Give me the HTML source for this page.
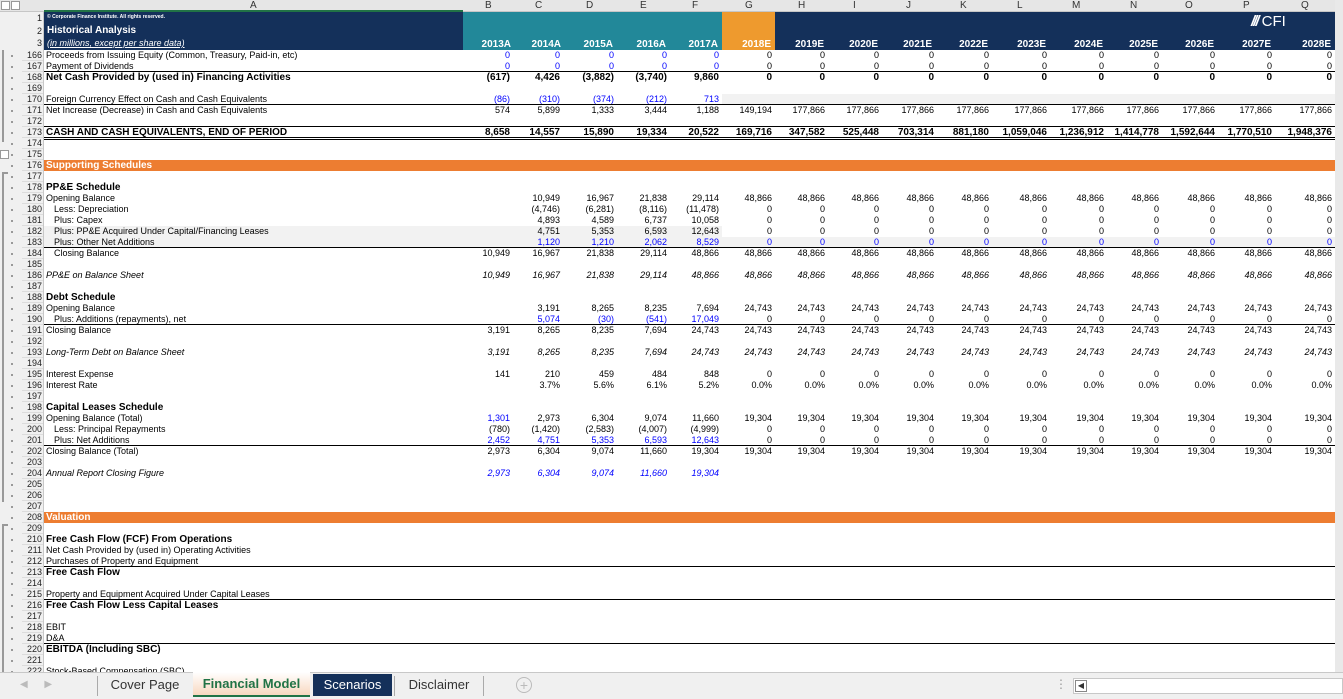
<!DOCTYPE html>
<html><head><meta charset="utf-8"><style>
*{margin:0;padding:0;box-sizing:border-box}
body{width:1343px;height:699px;overflow:hidden;background:#fff;font-family:"Liberation Sans",Arial,sans-serif;font-size:9px;color:#000;position:relative}
.abs{position:absolute}
table{border-collapse:separate;border-spacing:0;table-layout:fixed;position:absolute;left:22px}
td{height:11px;line-height:11px;white-space:nowrap;overflow:visible;text-align:right;padding-right:3px;vertical-align:middle}
td.rn{background:#f0f0f0;text-align:right;padding-right:2px;box-shadow:inset -1px 0 #c8c8c8,inset 0 -1px #dcdcdc;color:#222;font-size:9px}
td.a{text-align:left;padding-left:2px;overflow:hidden}
.in{padding-left:10px!important}
.b td{font-weight:bold;font-size:10px}
.b td.rn{font-weight:normal;font-size:9px}
.u td:not(.rn){box-shadow:inset 0 -1px #000}
.tl td:not(.rn){box-shadow:inset 0 1px #fff,inset 0 2px #000}
.bl{color:#0000ff}
.it td:not(.rn){font-style:italic}
.g{background:#f2f2f2}
.or td:not(.rn){background:#ed7d31;color:#fff;font-weight:bold;font-size:10px}
</style></head><body>
<div class="abs" style="left:0;top:0;width:1343px;height:12px;background:#e6e6e6;border-bottom:1px solid #c6c6c6"></div>
<div class="abs" style="left:1px;top:1px;width:9px;height:9px;border:1px solid #999;background:#fff"></div>
<div class="abs" style="left:11px;top:1px;width:9px;height:9px;border:1px solid #999;background:#fff"></div>
<div class="abs" style="left:44px;top:10px;width:419px;height:2px;background:#217346"></div>
<div class="abs" style="left:0;top:0;font-size:10px;line-height:12px;color:#333">
<span class="abs" style="left:250px">A</span>
<span class="abs" style="left:485px">B</span><span class="abs" style="left:535px">C</span><span class="abs" style="left:586px">D</span><span class="abs" style="left:640px">E</span><span class="abs" style="left:692px">F</span><span class="abs" style="left:745px">G</span><span class="abs" style="left:798px">H</span><span class="abs" style="left:853px">I</span><span class="abs" style="left:906px">J</span><span class="abs" style="left:960px">K</span><span class="abs" style="left:1017px">L</span><span class="abs" style="left:1072px">M</span><span class="abs" style="left:1130px">N</span><span class="abs" style="left:1185px">O</span><span class="abs" style="left:1243px">P</span><span class="abs" style="left:1301px">Q</span>
</div>
<div class="abs" style="left:44px;top:12px;width:1291px;height:38px;background:#14305a"></div>
<div class="abs" style="left:463px;top:12px;width:259px;height:38px;background:#228899"></div>
<div class="abs" style="left:722px;top:12px;width:53px;height:38px;background:#ee9a2e"></div>
<div class="abs" style="left:1335px;top:0;width:8px;height:672px;background:#e9e9e9"></div>
<div class="abs" style="left:22px;top:12px;width:22px;height:38px;background:#f0f0f0;box-shadow:inset -1px 0 #c8c8c8"></div>
<div class="abs" style="left:0;top:12px;width:22px;height:38px;background:#f0f0f0"></div>
<div class="abs" style="left:24px;top:12px;width:18px;font-size:9px;line-height:12.5px;text-align:right;color:#222">1<br>2<br>3</div>
<div class="abs" style="left:47px;top:14px;color:#fff;font-size:5px;font-weight:bold">© Corporate Finance Institute. All rights reserved.</div>
<div class="abs" style="left:47px;top:25px;color:#fff;font-size:10px;font-weight:bold">Historical Analysis</div>
<div class="abs" style="left:47px;top:38px;color:#fff;font-size:9px;font-style:italic;text-decoration:underline">(in millions, except per share data)</div>
<div class="abs" style="left:1251px;top:13px;color:#fff;font-size:15px"><span style="font-weight:bold;font-style:italic;letter-spacing:-2px">///</span> CFI</div>
<div class="abs" style="top:39px;left:0;color:#fff;font-weight:bold;font-size:10px;line-height:11px">
<span class="abs" style="right:-511px">2013A</span><span class="abs" style="right:-561px">2014A</span><span class="abs" style="right:-613px">2015A</span><span class="abs" style="right:-666px">2016A</span><span class="abs" style="right:-718px">2017A</span><span class="abs" style="right:-771px">2018E</span><span class="abs" style="right:-824px">2019E</span><span class="abs" style="right:-878px">2020E</span><span class="abs" style="right:-932px">2021E</span><span class="abs" style="right:-988px">2022E</span><span class="abs" style="right:-1046px">2023E</span><span class="abs" style="right:-1103px">2024E</span><span class="abs" style="right:-1158px">2025E</span><span class="abs" style="right:-1214px">2026E</span><span class="abs" style="right:-1271px">2027E</span><span class="abs" style="right:-1331px">2028E</span>
</div>
<div class="abs" style="left:0;top:50px;width:22px;height:622px;background:#f0f0f0"></div>
<div class="abs" style="left:2px;top:50px;width:2px;height:92px;background:#999"></div>
<div class="abs" style="left:0;top:150px;width:9px;height:9px;border:1px solid #999;background:#fff"></div>
<div class="abs" style="left:2px;top:172px;width:2px;height:330px;background:#999"></div>
<div class="abs" style="left:2px;top:172px;width:6px;height:2px;background:#999"></div>
<div class="abs" style="left:2px;top:524px;width:2px;height:148px;background:#999"></div>
<div class="abs" style="left:2px;top:524px;width:6px;height:2px;background:#999"></div>

<table style="top:50px;width:1313px">
<colgroup><col style="width:22px"><col style="width:419px"><col style="width:50px"><col style="width:50px"><col style="width:54px"><col style="width:53px"><col style="width:52px"><col style="width:53px"><col style="width:53px"><col style="width:54px"><col style="width:55px"><col style="width:55px"><col style="width:58px"><col style="width:57px"><col style="width:55px"><col style="width:56px"><col style="width:57px"><col style="width:60px"></colgroup>
<tr><td class="rn">166</td><td class="a">Proceeds from Issuing Equity (Common, Treasury, Paid-in, etc)</td><td class="bl">0</td><td class="bl">0</td><td class="bl">0</td><td class="bl">0</td><td class="bl">0</td><td>0</td><td>0</td><td>0</td><td>0</td><td>0</td><td>0</td><td>0</td><td>0</td><td>0</td><td>0</td><td>0</td></tr>
<tr class="u"><td class="rn">167</td><td class="a">Payment of Dividends</td><td class="bl">0</td><td class="bl">0</td><td class="bl">0</td><td class="bl">0</td><td class="bl">0</td><td>0</td><td>0</td><td>0</td><td>0</td><td>0</td><td>0</td><td>0</td><td>0</td><td>0</td><td>0</td><td>0</td></tr>
<tr class="b"><td class="rn">168</td><td class="a">Net Cash Provided by (used in) Financing Activities</td><td>(617)</td><td>4,426</td><td>(3,882)</td><td>(3,740)</td><td>9,860</td><td>0</td><td>0</td><td>0</td><td>0</td><td>0</td><td>0</td><td>0</td><td>0</td><td>0</td><td>0</td><td>0</td></tr>
<tr><td class="rn">169</td><td colspan="17"></td></tr>
<tr class="u"><td class="rn">170</td><td class="a">Foreign Currency Effect on Cash and Cash Equivalents</td><td class="bl">(86)</td><td class="bl">(310)</td><td class="bl">(374)</td><td class="bl">(212)</td><td class="bl">713</td><td class="g"></td><td class="g"></td><td class="g"></td><td class="g"></td><td class="g"></td><td class="g"></td><td class="g"></td><td class="g"></td><td class="g"></td><td class="g"></td><td class="g"></td></tr>
<tr><td class="rn">171</td><td class="a">Net Increase (Decrease) in Cash and Cash Equivalents</td><td>574</td><td>5,899</td><td>1,333</td><td>3,444</td><td>1,188</td><td>149,194</td><td>177,866</td><td>177,866</td><td>177,866</td><td>177,866</td><td>177,866</td><td>177,866</td><td>177,866</td><td>177,866</td><td>177,866</td><td>177,866</td></tr>
<tr class="u"><td class="rn">172</td><td colspan="17"></td></tr>
<tr class="b u"><td class="rn">173</td><td class="a">CASH AND CASH EQUIVALENTS, END OF PERIOD</td><td>8,658</td><td>14,557</td><td>15,890</td><td>19,334</td><td>20,522</td><td>169,716</td><td>347,582</td><td>525,448</td><td>703,314</td><td>881,180</td><td>1,059,046</td><td>1,236,912</td><td>1,414,778</td><td>1,592,644</td><td>1,770,510</td><td>1,948,376</td></tr>
<tr class="tl"><td class="rn">174</td><td colspan="17"></td></tr>
<tr><td class="rn">175</td><td colspan="17"></td></tr>
<tr class="or"><td class="rn">176</td><td class="a" colspan="17">Supporting Schedules</td></tr>
<tr><td class="rn">177</td><td colspan="17"></td></tr>
<tr class="b"><td class="rn">178</td><td class="a" colspan="17">PP&amp;E Schedule</td></tr>
<tr><td class="rn">179</td><td class="a">Opening Balance</td><td></td><td>10,949</td><td>16,967</td><td>21,838</td><td>29,114</td><td>48,866</td><td>48,866</td><td>48,866</td><td>48,866</td><td>48,866</td><td>48,866</td><td>48,866</td><td>48,866</td><td>48,866</td><td>48,866</td><td>48,866</td></tr>
<tr><td class="rn">180</td><td class="a in">Less: Depreciation</td><td></td><td>(4,746)</td><td>(6,281)</td><td>(8,116)</td><td>(11,478)</td><td>0</td><td>0</td><td>0</td><td>0</td><td>0</td><td>0</td><td>0</td><td>0</td><td>0</td><td>0</td><td>0</td></tr>
<tr><td class="rn">181</td><td class="a in">Plus: Capex</td><td></td><td>4,893</td><td>4,589</td><td>6,737</td><td>10,058</td><td>0</td><td>0</td><td>0</td><td>0</td><td>0</td><td>0</td><td>0</td><td>0</td><td>0</td><td>0</td><td>0</td></tr>
<tr><td class="rn">182</td><td class="a in g">Plus: PP&amp;E Acquired Under Capital/Financing Leases</td><td class="g"></td><td class="g">4,751</td><td class="g">5,353</td><td class="g">6,593</td><td class="g">12,643</td><td>0</td><td>0</td><td>0</td><td>0</td><td>0</td><td>0</td><td>0</td><td>0</td><td>0</td><td>0</td><td>0</td></tr>
<tr class="u"><td class="rn">183</td><td class="a in g">Plus: Other Net Additions</td><td class="g"></td><td class="g bl">1,120</td><td class="g bl">1,210</td><td class="g bl">2,062</td><td class="g bl">8,529</td><td class="g bl">0</td><td class="g bl">0</td><td class="g bl">0</td><td class="g bl">0</td><td class="g bl">0</td><td class="g bl">0</td><td class="g bl">0</td><td class="g bl">0</td><td class="g bl">0</td><td class="g bl">0</td><td class="g bl">0</td></tr>
<tr><td class="rn">184</td><td class="a in">Closing Balance</td><td>10,949</td><td>16,967</td><td>21,838</td><td>29,114</td><td>48,866</td><td>48,866</td><td>48,866</td><td>48,866</td><td>48,866</td><td>48,866</td><td>48,866</td><td>48,866</td><td>48,866</td><td>48,866</td><td>48,866</td><td>48,866</td></tr>
<tr><td class="rn">185</td><td colspan="17"></td></tr>
<tr class="it"><td class="rn">186</td><td class="a">PP&amp;E on Balance Sheet</td><td>10,949</td><td>16,967</td><td>21,838</td><td>29,114</td><td>48,866</td><td>48,866</td><td>48,866</td><td>48,866</td><td>48,866</td><td>48,866</td><td>48,866</td><td>48,866</td><td>48,866</td><td>48,866</td><td>48,866</td><td>48,866</td></tr>
<tr><td class="rn">187</td><td colspan="17"></td></tr>
<tr class="b"><td class="rn">188</td><td class="a" colspan="17">Debt Schedule</td></tr>
<tr><td class="rn">189</td><td class="a">Opening Balance</td><td></td><td>3,191</td><td>8,265</td><td>8,235</td><td>7,694</td><td>24,743</td><td>24,743</td><td>24,743</td><td>24,743</td><td>24,743</td><td>24,743</td><td>24,743</td><td>24,743</td><td>24,743</td><td>24,743</td><td>24,743</td></tr>
<tr class="u"><td class="rn">190</td><td class="a in">Plus: Additions (repayments), net</td><td></td><td class="bl">5,074</td><td class="bl">(30)</td><td class="bl">(541)</td><td class="bl">17,049</td><td>0</td><td>0</td><td>0</td><td>0</td><td>0</td><td>0</td><td>0</td><td>0</td><td>0</td><td>0</td><td>0</td></tr>
<tr><td class="rn">191</td><td class="a">Closing Balance</td><td>3,191</td><td>8,265</td><td>8,235</td><td>7,694</td><td>24,743</td><td>24,743</td><td>24,743</td><td>24,743</td><td>24,743</td><td>24,743</td><td>24,743</td><td>24,743</td><td>24,743</td><td>24,743</td><td>24,743</td><td>24,743</td></tr>
<tr><td class="rn">192</td><td colspan="17"></td></tr>
<tr class="it"><td class="rn">193</td><td class="a">Long-Term Debt on Balance Sheet</td><td>3,191</td><td>8,265</td><td>8,235</td><td>7,694</td><td>24,743</td><td>24,743</td><td>24,743</td><td>24,743</td><td>24,743</td><td>24,743</td><td>24,743</td><td>24,743</td><td>24,743</td><td>24,743</td><td>24,743</td><td>24,743</td></tr>
<tr><td class="rn">194</td><td colspan="17"></td></tr>
<tr><td class="rn">195</td><td class="a">Interest Expense</td><td>141</td><td>210</td><td>459</td><td>484</td><td>848</td><td>0</td><td>0</td><td>0</td><td>0</td><td>0</td><td>0</td><td>0</td><td>0</td><td>0</td><td>0</td><td>0</td></tr>
<tr><td class="rn">196</td><td class="a">Interest Rate</td><td></td><td>3.7%</td><td>5.6%</td><td>6.1%</td><td>5.2%</td><td>0.0%</td><td>0.0%</td><td>0.0%</td><td>0.0%</td><td>0.0%</td><td>0.0%</td><td>0.0%</td><td>0.0%</td><td>0.0%</td><td>0.0%</td><td>0.0%</td></tr>
<tr><td class="rn">197</td><td colspan="17"></td></tr>
<tr class="b"><td class="rn">198</td><td class="a" colspan="17">Capital Leases Schedule</td></tr>
<tr><td class="rn">199</td><td class="a">Opening Balance (Total)</td><td class="bl">1,301</td><td>2,973</td><td>6,304</td><td>9,074</td><td>11,660</td><td>19,304</td><td>19,304</td><td>19,304</td><td>19,304</td><td>19,304</td><td>19,304</td><td>19,304</td><td>19,304</td><td>19,304</td><td>19,304</td><td>19,304</td></tr>
<tr><td class="rn">200</td><td class="a in">Less: Principal Repayments</td><td>(780)</td><td>(1,420)</td><td>(2,583)</td><td>(4,007)</td><td>(4,999)</td><td>0</td><td>0</td><td>0</td><td>0</td><td>0</td><td>0</td><td>0</td><td>0</td><td>0</td><td>0</td><td>0</td></tr>
<tr class="u"><td class="rn">201</td><td class="a in">Plus: Net Additions</td><td class="bl">2,452</td><td class="bl">4,751</td><td class="bl">5,353</td><td class="bl">6,593</td><td class="bl">12,643</td><td>0</td><td>0</td><td>0</td><td>0</td><td>0</td><td>0</td><td>0</td><td>0</td><td>0</td><td>0</td><td>0</td></tr>
<tr><td class="rn">202</td><td class="a">Closing Balance (Total)</td><td>2,973</td><td>6,304</td><td>9,074</td><td>11,660</td><td>19,304</td><td>19,304</td><td>19,304</td><td>19,304</td><td>19,304</td><td>19,304</td><td>19,304</td><td>19,304</td><td>19,304</td><td>19,304</td><td>19,304</td><td>19,304</td></tr>
<tr><td class="rn">203</td><td colspan="17"></td></tr>
<tr class="it"><td class="rn">204</td><td class="a">Annual Report Closing Figure</td><td class="bl">2,973</td><td class="bl">6,304</td><td class="bl">9,074</td><td class="bl">11,660</td><td class="bl">19,304</td><td colspan="11"></td></tr>
<tr><td class="rn">205</td><td colspan="17"></td></tr>
<tr><td class="rn">206</td><td colspan="17"></td></tr>
<tr><td class="rn">207</td><td colspan="17"></td></tr>
<tr class="or"><td class="rn">208</td><td class="a" colspan="17">Valuation</td></tr>
<tr><td class="rn">209</td><td colspan="17"></td></tr>
<tr class="b"><td class="rn">210</td><td class="a" colspan="17">Free Cash Flow (FCF) From Operations</td></tr>
<tr><td class="rn">211</td><td class="a" colspan="17">Net Cash Provided by (used in) Operating Activities</td></tr>
<tr class="u"><td class="rn">212</td><td class="a" colspan="17">Purchases of Property and Equipment</td></tr>
<tr class="b"><td class="rn">213</td><td class="a" colspan="17">Free Cash Flow</td></tr>
<tr><td class="rn">214</td><td colspan="17"></td></tr>
<tr class="u"><td class="rn">215</td><td class="a" colspan="17">Property and Equipment Acquired Under Capital Leases</td></tr>
<tr class="b"><td class="rn">216</td><td class="a" colspan="17">Free Cash Flow Less Capital Leases</td></tr>
<tr><td class="rn">217</td><td colspan="17"></td></tr>
<tr><td class="rn">218</td><td class="a" colspan="17">EBIT</td></tr>
<tr class="u"><td class="rn">219</td><td class="a" colspan="17">D&amp;A</td></tr>
<tr class="b"><td class="rn">220</td><td class="a" colspan="17">EBITDA (Including SBC)</td></tr>
<tr><td class="rn">221</td><td colspan="17"></td></tr>
<tr><td class="rn">222</td><td class="a" colspan="17">Stock-Based Compensation (SBC)</td></tr>
</table>
<div class="abs" style="left:11px;top:50px;width:2px;height:622px;background:repeating-linear-gradient(#f0f0f0 0 5px,#999 5px 7px,#f0f0f0 7px 11px)"></div>
<div class="abs" style="left:0;top:672px;width:1343px;height:27px;background:#f0f0f0;border-top:1px solid #c8c8c8"></div>
<div class="abs" style="left:20px;top:679px;color:#bbb;font-size:10px">◀&nbsp;&nbsp;&nbsp;&nbsp;&nbsp;&nbsp;▶</div>
<div class="abs" style="left:97px;top:676px;width:1px;height:20px;background:#aaa"></div>
<div class="abs" style="left:98px;top:673px;width:94px;height:24px;font-size:13px;line-height:24px;text-align:center;color:#333">Cover Page</div>
<div class="abs" style="left:193px;top:672px;width:117px;height:25px;background:linear-gradient(#fff,#f8d8c0);border-bottom:2px solid #217346;font-size:13px;line-height:24px;text-align:center;color:#217346;font-weight:bold">Financial Model</div>
<div class="abs" style="left:313px;top:674px;width:79px;height:22px;background:#14305a;font-size:13px;line-height:22px;text-align:center;color:#fff">Scenarios</div>
<div class="abs" style="left:394px;top:676px;width:1px;height:20px;background:#aaa"></div>
<div class="abs" style="left:395px;top:673px;width:88px;height:24px;font-size:13px;line-height:24px;text-align:center;color:#333">Disclaimer</div>
<div class="abs" style="left:483px;top:676px;width:1px;height:20px;background:#aaa"></div>
<div class="abs" style="left:516px;top:677px;width:16px;height:16px;border:1px solid #bbb;border-radius:50%;color:#bbb;font-size:14px;line-height:14px;text-align:center">+</div>
<div class="abs" style="left:1055px;top:677px;color:#999;font-size:12px">⋮</div>
<div class="abs" style="left:1073px;top:678px;width:270px;height:16px;background:#fff;border:1px solid #c8c8c8"></div>
<div class="abs" style="left:1075px;top:680px;width:12px;height:12px;border:1px solid #888;font-size:8px;line-height:10px;text-align:center;color:#333">◀</div>
</body></html>
